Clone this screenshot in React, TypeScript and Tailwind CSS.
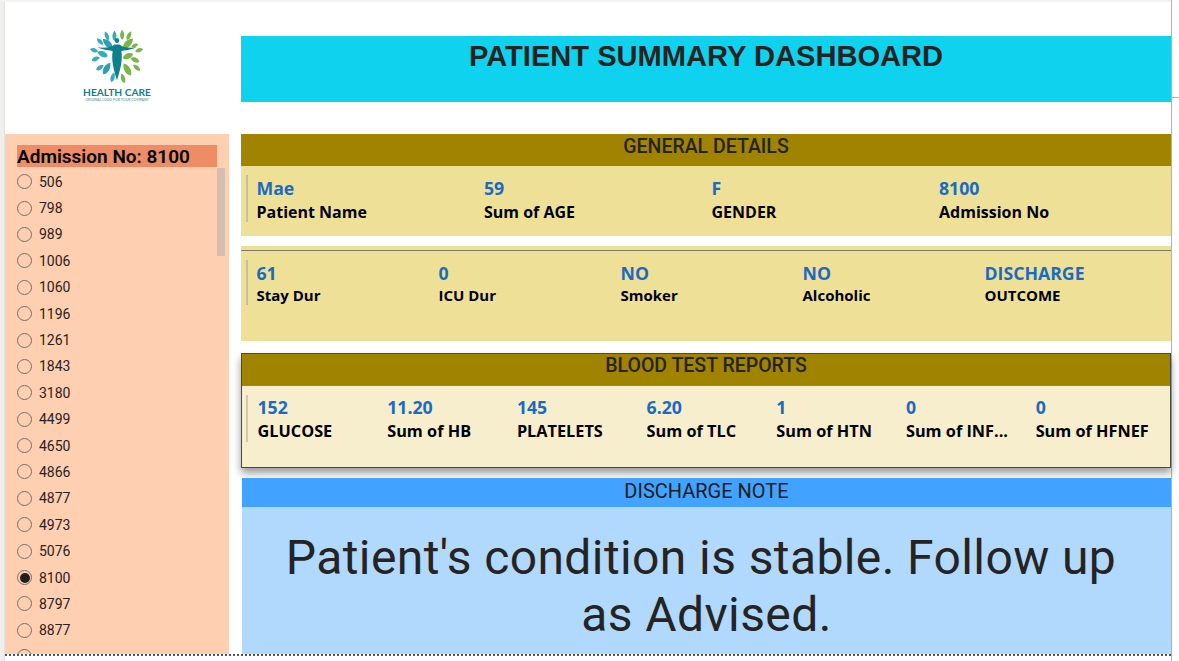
import React from 'react';

const din = "font-['Roboto',sans-serif]";
const segoe = "font-['Open_Sans',sans-serif]";

const admissions = [506, 798, 989, 1006, 1060, 1196, 1261, 1843, 3180, 4499, 4650, 4866, 4877, 4973, 5076, 8100, 8797, 8877];

const general = [
  { value: 'Mae', label: 'Patient Name' },
  { value: '59', label: 'Sum of AGE' },
  { value: 'F', label: 'GENDER' },
  { value: '8100', label: 'Admission No' },
];

const stay = [
  { value: '61', label: 'Stay Dur' },
  { value: '0', label: 'ICU Dur' },
  { value: 'NO', label: 'Smoker' },
  { value: 'NO', label: 'Alcoholic' },
  { value: 'DISCHARGE', label: 'OUTCOME' },
];

const blood = [
  { value: '152', label: 'GLUCOSE' },
  { value: '11.20', label: 'Sum of HB' },
  { value: '145', label: 'PLATELETS' },
  { value: '6.20', label: 'Sum of TLC' },
  { value: '1', label: 'Sum of HTN' },
  { value: '0', label: 'Sum of INF...' },
  { value: '0', label: 'Sum of HFNEF' },
];

const leaves = [
  { x: 22, y: 7, r: -25, c: '#35abc0', s: 1 },
  { x: 31, y: 7, r: 0, c: '#35abc0', s: 1.05 },
  { x: 40, y: 6, r: 0, c: '#7ab648', s: 1.05 },
  { x: 48, y: 7, r: 30, c: '#7ab648', s: 1 },
  { x: 14, y: 13, r: -50, c: '#35abc0', s: 0.95 },
  { x: 23, y: 15, r: -50, c: '#2b9fb8', s: 1.45 },
  { x: 47, y: 15, r: 50, c: '#7ab648', s: 1.5 },
  { x: 55, y: 17, r: 70, c: '#7ab648', s: 0.85 },
  { x: 7, y: 22, r: -75, c: '#35abc0', s: 0.95 },
  { x: 60, y: 22, r: 75, c: '#7ab648', s: 0.95 },
  { x: 17, y: 26, r: -70, c: '#35abc0', s: 1.3 },
  { x: 47, y: 28, r: 70, c: '#7ab648', s: 1.3 },
  { x: 9, y: 31, r: 70, c: '#35abc0', s: 1 },
  { x: 55, y: 32, r: -70, c: '#7ab648', s: 1.1 },
  { x: 14, y: 40, r: 60, c: '#35abc0', s: 1 },
  { x: 22, y: 41, r: 35, c: '#2b9fb8', s: 1.45 },
  { x: 46, y: 42, r: -35, c: '#7ab648', s: 1.5 },
  { x: 57, y: 40, r: -55, c: '#7ab648', s: 1 },
  { x: 29, y: 50, r: 20, c: '#35abc0', s: 1.05 },
  { x: 41, y: 51, r: -20, c: '#7ab648', s: 1.05 },
];

const Logo = () => (
  <div className="flex flex-col items-center">
    <svg width="58" height="56" viewBox="0 0 68 58" preserveAspectRatio="none" className="block">
      {leaves.map((l, i) => (
        <path
          key={i}
          d="M0 -5 C3 -2 3 3 0 5 C-3 3 -3 -2 0 -5 Z"
          fill={l.c}
          transform={`translate(${l.x} ${l.y}) rotate(${l.r}) scale(${l.s})`}
        />
      ))}
      <circle cx="34" cy="12" r="2.6" fill="#0f7f8c" />
      <path
        d="M11 19 C20 20 27 19 31 16 L37 16 C41 19 48 20 57 19 C49 22 43 22 39 23 C41 31 38 42 34 53 C30 42 27 31 29 23 C25 22 19 22 11 19 Z"
        fill="#0f7f8c"
      />
    </svg>
    <span className="font-['Lato',sans-serif] font-bold text-[10.2px] leading-[11px] text-[#0f7f8c] mt-[2px] whitespace-nowrap">
      HEALTH CARE
    </span>
    <span className="font-['Lato',sans-serif] text-[3.5px] leading-[4px] text-[#3b8e98] whitespace-nowrap">
      ORIGINAL LOGO FOR YOUR COMPANY
    </span>
  </div>
);

const Radio = ({ checked }: { checked: boolean }) => (
  <span className="w-[15px] h-[15px] rounded-full border border-[#77706c] flex items-center justify-center shrink-0">
    {checked && <span className="w-[10px] h-[10px] rounded-full bg-[#201f1e]" />}
  </span>
);

const Slicer = () => (
  <div className="relative h-[520px] bg-[#ffcfb2] overflow-hidden pl-[12px] pt-[11px]">
    <div className={`w-[200px] h-[22px] bg-[#ee8c65] text-[19px] leading-[24px] font-semibold text-black whitespace-nowrap ${din}`}>
      Admission No: 8100
    </div>
    <div className="mt-[1.5px]">
      {admissions.map((n) => (
        <div key={n} className="h-[26.4px] flex items-center gap-[7px]">
          <Radio checked={n === 8100} />
          <span className={`text-[14px] leading-none text-[#252423] ${din}`}>{n}</span>
        </div>
      ))}
      {/* next option is cut off by the slicer edge */}
      <div className="h-[26.4px] flex items-center">
        <Radio checked={false} />
      </div>
    </div>
    <div className="absolute left-[212px] top-[34px] w-[8px] h-[88px] bg-[#d7bdad]" />
  </div>
);

const Stat = ({ value, label, kind, width }: { value: string; label: string; kind: 'general' | 'stay' | 'blood'; width: string }) => (
  <div className={`${width} shrink-0 whitespace-nowrap ${segoe}`}>
    <div className={`font-bold text-[#1a6bc4] text-[17.7px] ${kind === 'stay' ? 'leading-[22px]' : 'leading-[24px]'}`}>{value}</div>
    <div className={`font-bold text-black ${kind === 'stay' ? 'text-[15px] leading-[22px]' : kind === 'blood' ? 'text-[16.3px] leading-[24px]' : 'text-[16px] leading-[24px]'}`}>{label}</div>
  </div>
);

const SectionTitle = ({ children, className }: { children: string; className: string }) => (
  <div className={`flex items-center justify-center text-[19.5px] font-medium text-[#252423] ${din} ${className}`}>
    {children}
  </div>
);

const App = () => {
  return (
    <div className="relative w-[1179px] h-[661px] overflow-hidden bg-white flex">
      <div className="w-[5px] h-full bg-[#f0efed] border-r border-[#e4e2e0] shrink-0" />

      <div className="w-[224px] shrink-0 flex flex-col">
        <div className="h-[134px] pt-[29px] flex justify-center">
          <Logo />
        </div>
        <Slicer />
      </div>

      <div className="w-[930px] ml-[12px] shrink-0 flex flex-col pt-[36px]">
        <div className="h-[66px] bg-[#0fd2ee] text-center text-[29.1px] leading-[40px] font-bold text-[#252423] font-['Liberation_Sans',sans-serif]">
          PATIENT SUMMARY DASHBOARD
        </div>

        <SectionTitle className="mt-[32px] h-[32px] pb-[6px] bg-[#a08300] border-b border-[#8b7d3a]">GENERAL DETAILS</SectionTitle>
        <div className="h-[70px] bg-[#efe098] flex items-start pt-[9px] pl-[5px]">
          <div className="w-[2px] h-[47px] bg-[#c5c09c] mr-[8.5px]" />
          <div className="flex mt-[1px]">
            {general.map((s) => (
              <Stat key={s.label} {...s} kind="general" width="w-[227.5px]" />
            ))}
          </div>
        </div>

        <div className="mt-[10px] h-[95px] bg-[#efe098] pt-[4px]">
          <div className="h-full border-t border-[#7d7a66] pt-[9px] pl-[5px] flex items-start">
            <div className="w-[2px] h-[45px] bg-[#c5c09c] mr-[8px]" />
            <div className="flex mt-[2px] ml-[0.5px]">
              {stay.map((s) => (
                <Stat key={s.label} value={s.value} label={s.label} kind="stay" width="w-[182px]" />
              ))}
            </div>
          </div>
        </div>

        <div className="relative mt-[12px] h-[115px] border border-[#4a4a42] bg-[#f7eecd] shadow-[0_5px_8px_rgba(0,0,0,0.4)]">
          <SectionTitle className="h-[32px] pb-[8px] bg-[#a08300] border-b border-[#8b8468]">BLOOD TEST REPORTS</SectionTitle>
          <div className="flex items-start pt-[9px] pl-[4px]">
            <div className="w-[2px] h-[47px] bg-[#cfc9b0] mr-[9.5px]" />
            <div className="flex">
              {blood.map((s) => (
                <Stat key={s.value + s.label} value={s.value} label={s.label} kind="blood" width="w-[129.7px]" />
              ))}
            </div>
          </div>
        </div>

        <div className={`relative mt-[10px] ml-[1px] h-[29px] pb-[3px] bg-[#41a2ff] flex items-center justify-center text-[20px] text-[#1c1c1c] ${din}`}>
          DISCHARGE NOTE
        </div>
        <div className={`ml-[1px] h-[147px] bg-[#b1d8fd] px-[30px] pt-[22px] text-center text-[48px] leading-[57px] tracking-[0.4px] text-[#252423] ${din}`}>
          <span className="block pr-[11px]">Patient's condition is stable. Follow up</span>
          <span className="block">as Advised.</span>
        </div>
      </div>

      <div className="w-[1px] h-full bg-[#b3b0ad] shrink-0" />
      <div className="absolute right-0 top-[97px] w-[7px] h-[1px] bg-[#b3b0ad]" />
      <div className="absolute left-0 top-0 w-[1171px] h-[2px] bg-[#f5f4f3]" />
      <div className="absolute left-[5px] top-[654px] w-[1166px] border-t-2 border-dotted border-[#555]" />
    </div>
  );
};

export default App;
